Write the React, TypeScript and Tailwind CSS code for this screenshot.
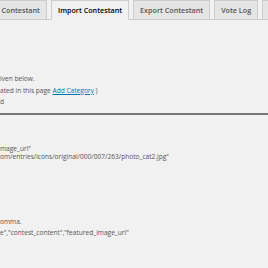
export default function App() {
  const tab =
    "-mb-px h-[20px] px-[6px] border border-[#ccc] bg-[#e5e5e5] text-[7.2px] leading-[18px] font-semibold text-[#555] whitespace-nowrap";
  return (
    <div className="w-[268px] h-[268px] overflow-hidden bg-[#f1f1f1] font-['Open_Sans',sans-serif]">
      <div className="flex items-end h-[20px] border-b border-[#ccc]">
        <div className={tab + " ml-[-35px]"}>Manage Contestant</div>
        <div className={tab + " ml-[4px] bg-[#f1f1f1] border-b-[#f1f1f1] text-black"}>Import Contestant</div>
        <div className={tab + " ml-[4px]"}>Export Contestant</div>
        <div className={tab + " ml-[4px]"}>Vote Log</div>
        <div className={tab + " ml-[4px]"}>Contest</div>
      </div>

      <div className="text-[6.6px] leading-[11.5px] text-[#555]">
        <p className="mt-[53px]">iven below.</p>
        <p>
          ated in this page{" "}
          <a href="#" className="text-[#0073aa] underline">
            Add Category
          </a>{" "}
          )
        </p>
        <p>d</p>
      </div>

      <div className="mt-[5px] h-[2px] bg-[#767676]" />

      <div className="text-[6.6px] leading-[8px] text-[#555] whitespace-nowrap">
        <p className="mt-[30px]">mage_url"</p>
        <p>om/entries/icons/original/000/007/263/photo_cat2.jpg"</p>
      </div>

      <div className="text-[6.6px] leading-[11.5px] text-[#555] whitespace-nowrap">
        <p className="mt-[55px]">omma.</p>
        <p>e","contest_content","featured_image_url"</p>
      </div>
    </div>
  );
}
